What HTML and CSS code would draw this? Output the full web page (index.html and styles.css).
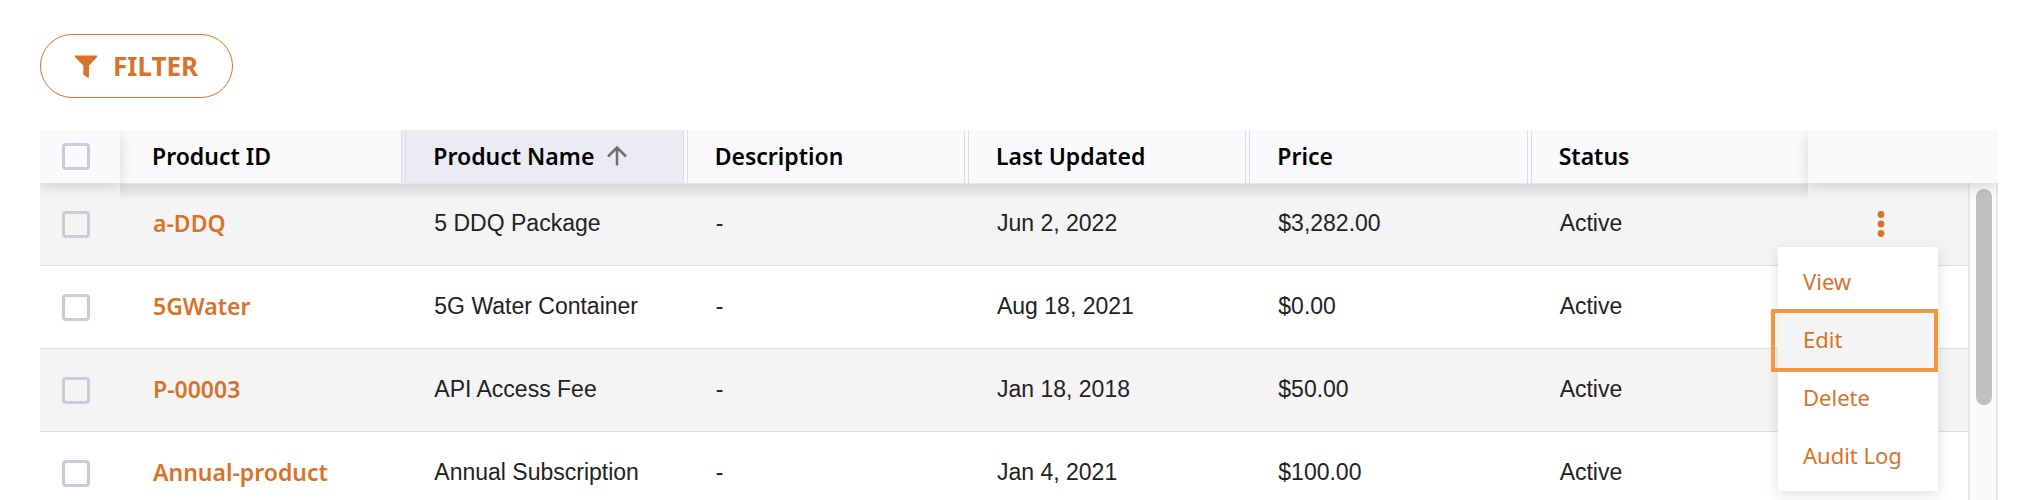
FILE: index.html
```html
<!DOCTYPE html>
<html lang="en">
<head>
    <meta charset="UTF-8">
    <meta name="viewport" content="width=device-width, initial-scale=1.0">
    <title>Products</title>
    <link rel="stylesheet" href="styles.css">
</head>
<body>
    <div class="toolbar">
        <button type="button" class="filter-button">
            <svg class="filter-icon" viewBox="0 0 22 23" aria-hidden="true"><path d="M0 0.5H22V2.2L14 10.5V22.6H12.4L8.3 19.6V10.5L0 2.2Z" fill="currentColor"/></svg>
            FILTER
        </button>
    </div>

    <div class="grid">
        <table class="products">
            <colgroup>
                <col class="col-check">
                <col><col><col><col><col><col>
                <col class="col-actions">
            </colgroup>
            <thead>
                <tr>
                    <th class="pinned check"><input type="checkbox" aria-label="Select all"></th>
                    <th>Product ID</th>
                    <th class="sorted divided">
                        <span class="sort-label">Product Name
                            <svg class="sort-icon" viewBox="0 0 20 20" aria-hidden="true"><path d="M10 19.5V1.5M1 10.5L10 1.5L19 10.5" fill="none" stroke="currentColor" stroke-width="2.5"/></svg>
                        </span>
                    </th>
                    <th class="divided">Description</th>
                    <th class="divided">Last Updated</th>
                    <th class="divided">Price</th>
                    <th class="divided">Status</th>
                    <th class="pinned"></th>
                </tr>
            </thead>
            <tbody>
                <tr>
                    <td class="check"><input type="checkbox" aria-label="Select a-DDQ"></td>
                    <td><a href="#">a-DDQ</a></td>
                    <td>5 DDQ Package</td>
                    <td>-</td>
                    <td>Jun 2, 2022</td>
                    <td>$3,282.00</td>
                    <td>Active</td>
                    <td class="actions">
                        <button type="button" class="kebab" aria-label="Row actions">
                            <svg viewBox="0 0 8 28" aria-hidden="true"><g fill="currentColor"><circle cx="4" cy="4.5" r="3.4"/><circle cx="4" cy="14" r="3.4"/><circle cx="4" cy="23.5" r="3.4"/></g></svg>
                        </button>
                        <div class="menu">
                            <button type="button" class="menu-item">View</button>
                            <button type="button" class="menu-item active">Edit</button>
                            <button type="button" class="menu-item">Delete</button>
                            <button type="button" class="menu-item">Audit Log</button>
                        </div>
                    </td>
                </tr>
                <tr>
                    <td class="check"><input type="checkbox" aria-label="Select 5GWater"></td>
                    <td><a href="#">5GWater</a></td>
                    <td>5G Water Container</td>
                    <td>-</td>
                    <td>Aug 18, 2021</td>
                    <td>$0.00</td>
                    <td>Active</td>
                    <td></td>
                </tr>
                <tr>
                    <td class="check"><input type="checkbox" aria-label="Select P-00003"></td>
                    <td><a href="#">P-00003</a></td>
                    <td>API Access Fee</td>
                    <td>-</td>
                    <td>Jan 18, 2018</td>
                    <td>$50.00</td>
                    <td>Active</td>
                    <td></td>
                </tr>
                <tr>
                    <td class="check"><input type="checkbox" aria-label="Select Annual-product"></td>
                    <td><a href="#">Annual-product</a></td>
                    <td>Annual Subscription</td>
                    <td>-</td>
                    <td>Jan 4, 2021</td>
                    <td>$100.00</td>
                    <td>Active</td>
                    <td></td>
                </tr>
            </tbody>
        </table>
        <div class="scroll-track"><div class="scroll-thumb"></div></div>
    </div>
</body>
</html>
```
FILE: styles.css
```css
* {
    box-sizing: border-box;
}
body {
    margin: 0;
    height: 100vh;
    padding: 34px 22px 0 40px;
    background-color: #ffffff;
    font-family: 'Liberation Sans', Arial, sans-serif;
    font-size: 23px;
    color: #222222;
    display: flex;
    flex-direction: column;
    gap: 32px;
    overflow: hidden;
}
.toolbar {
    display: flex;
}
.filter-button {
    display: flex;
    align-items: center;
    gap: 16px;
    height: 64px;
    padding: 0 34px;
    border: 1px solid #d8732c;
    border-radius: 32px;
    background-color: #ffffff;
    color: #d8732c;
    font-family: 'Noto Sans', sans-serif;
    font-size: 26px;
    font-weight: 700;
    cursor: pointer;
}
.filter-icon {
    width: 22px;
    height: 23px;
}

/* Product table */
.grid {
    position: relative;
    flex: 1;
    min-height: 0;
    overflow: hidden;
}
.products {
    width: 100%;
    table-layout: fixed;
    border-collapse: separate;
    border-spacing: 0;
}
.col-check {
    width: 80px;
}
.col-actions {
    width: 190px;
}
.products th {
    position: relative;
    z-index: 2;
    height: 53px;
    padding: 0 32px 2px;
    background-color: #fafafd;
    color: #000000;
    font-family: 'Noto Sans', sans-serif;
    font-size: 23px;
    font-weight: 600;
    line-height: 32px;
    text-align: left;
    white-space: nowrap;
}
.products th::after {
    content: "";
    position: absolute;
    left: 0;
    right: 0;
    top: 100%;
    height: 16px;
    border-top: 1px solid #e6e6ea;
    background: linear-gradient(rgba(0, 0, 0, 0.11), rgba(0, 0, 0, 0.08) 40%, rgba(0, 0, 0, 0));
}
.products th.sorted {
    background-color: #ebebf4;
}
.products th.divided::before {
    content: "";
    position: absolute;
    left: 0;
    top: 0;
    bottom: -1px;
    width: 3px;
    border-left: 1px solid #dddde6;
    border-right: 1px solid #dddde6;
}
.products th.pinned {
    z-index: 3;
    box-shadow: 0 4px 12px rgba(0, 0, 0, 0.14);
}
.products th.pinned::after {
    display: none;
}
.sort-label {
    display: flex;
    align-items: center;
    gap: 13px;
}
.sort-icon {
    width: 20px;
    height: 20px;
    color: #707070;
}
.products td {
    height: 83px;
    padding: 0 33px 2px;
    border-bottom: 1px solid #dedede;
    line-height: 32px;
    white-space: nowrap;
}
.products tbody tr:nth-child(odd) {
    background-color: #f4f4f4;
}
.products a {
    color: #d8732c;
    font-family: 'Noto Sans', sans-serif;
    font-weight: 600;
    text-decoration: none;
}
.products .check {
    padding: 0 22px;
}
.check input {
    appearance: none;
    display: block;
    width: 28px;
    height: 27px;
    margin: 0;
    border: 3px solid #cbcad6;
    border-radius: 4px;
}

/* Row menu */
.products .actions {
    position: relative;
    padding: 0 0 0 61px;
}
.kebab {
    display: block;
    width: 24px;
    height: 28px;
    padding: 0 8px;
    border: none;
    background: none;
    color: #d8732c;
    cursor: pointer;
}
.kebab svg {
    display: block;
    width: 8px;
    height: 28px;
}
.menu {
    position: absolute;
    z-index: 4;
    top: 64px;
    left: -30px;
    width: 160px;
    padding: 6px 0;
    background-color: #ffffff;
    box-shadow: 0 4px 14px rgba(0, 0, 0, 0.12);
}
.menu-item {
    position: relative;
    display: block;
    width: 100%;
    height: 58px;
    padding: 0 25px 2px;
    border: none;
    background: none;
    color: #d8732c;
    font-family: 'Noto Sans', sans-serif;
    font-size: 22px;
    line-height: 32px;
    text-align: left;
    white-space: nowrap;
    cursor: pointer;
}
.menu-item.active {
    background-color: #f4f4f4;
}
.menu-item.active::after {
    content: "";
    position: absolute;
    inset: -2px 0 -3px -7px;
    border: 4px solid #f39838;
}

.scroll-track {
    position: absolute;
    top: 53px;
    right: 0;
    bottom: 0;
    width: 30px;
    padding: 6px;
    border: solid #e8e8e8;
    border-width: 0 2px;
    background-color: #fafafa;
}
.scroll-thumb {
    width: 16px;
    height: 216px;
    border-radius: 8px;
    background-color: #c1c1c1;
}
```
